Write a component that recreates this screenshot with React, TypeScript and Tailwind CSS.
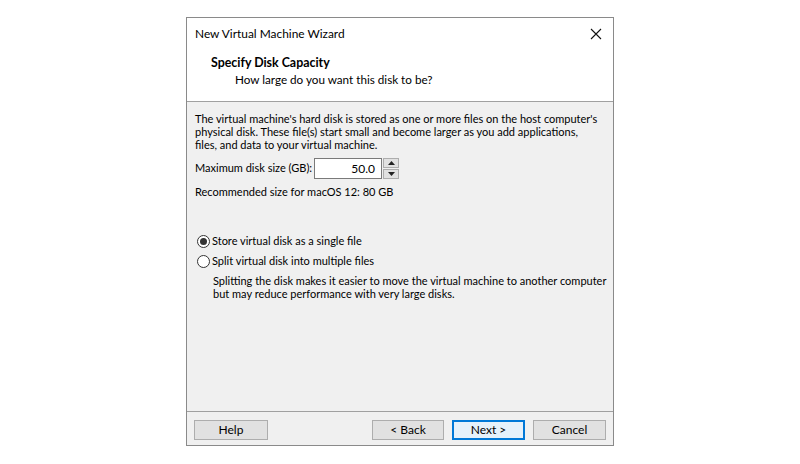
import React from "react";

const font = { fontFamily: 'Lato, "Noto Sans", "Open Sans", sans-serif' };

function Radio({ checked }: { checked: boolean }) {
  return (
    <span className="relative inline-flex w-[13px] h-[13px] rounded-full border border-[#333333] bg-white items-center justify-center shrink-0">
      {checked && <span className="w-[7px] h-[7px] rounded-full bg-[#333333]" />}
    </span>
  );
}

function Btn({ children, primary }: { children: React.ReactNode; primary?: boolean }) {
  return (
    <div
      className={
        "h-[20px] flex items-center justify-center bg-[#e1e1e1] text-[12px] text-black " +
        (primary ? "border-2 border-[#0078d7] bg-[#e5f1fb]" : "border border-[#adadad]")
      }
    >
      {children}
    </div>
  );
}

export default function App() {
  return (
    <div className="w-[800px] h-[464px] bg-white relative overflow-hidden" style={font}>
      <div className="absolute left-[186px] top-[17px] w-[428px] h-[429px] border border-[#8a8a8a] bg-[#f0f0f0] flex flex-col text-black">
        {/* title + header */}
        <div className="bg-white h-[83px] flex flex-col">
          <div className="h-[31px] flex items-center justify-between pl-[8px] pr-[10px]">
            <span className="text-[11.9px] leading-none">New Virtual Machine Wizard</span>
            <svg width="12" height="12" viewBox="0 0 12 12" className="mr-[1px]">
              <path d="M1 1 L11 11 M11 1 L1 11" stroke="#111" strokeWidth="1.1" />
            </svg>
          </div>
          <div className="pl-[24px] mt-[6px] text-[12.4px] leading-[16px] font-bold">Specify Disk Capacity</div>
          <div className="pl-[48px] text-[11.7px] leading-[16px]">How large do you want this disk to be?</div>
        </div>
        <div className="h-px bg-[#a0a0a0]" />
        {/* body */}
        <div className="flex-1 flex flex-col pl-[8px] pr-[8px] pt-[10px] text-[11px] whitespace-nowrap">
          <p className="leading-[13px]">
            The virtual machine's hard disk is stored as one or more files on the host computer's
            <br />
            physical disk. These file(s) start small and become larger as you add applications,
            <br />
            files, and data to your virtual machine.
          </p>
          <div className="mt-[7px] h-[21px] flex items-center">
            <span className="w-[119px]">Maximum disk size (GB):</span>
            <div className="h-[21px] w-[68px] border border-[#7a7a7a] bg-white flex items-center justify-end pr-[6px] text-[12px]">
              50.0
            </div>
            <div className="ml-[1px] h-[21px] w-[16px] flex flex-col gap-[1px]">
              <div className="flex-1 bg-[#e1e1e1] border border-[#adadad] flex items-center justify-center">
                <svg width="7" height="4" viewBox="0 0 7 4"><path d="M0 4 L3.5 0 L7 4 Z" fill="#222" /></svg>
              </div>
              <div className="flex-1 bg-[#e1e1e1] border border-[#adadad] flex items-center justify-center">
                <svg width="7" height="4" viewBox="0 0 7 4"><path d="M0 0 L3.5 4 L7 0 Z" fill="#222" /></svg>
              </div>
            </div>
          </div>
          <div className="mt-[6px] leading-[13px]">Recommended size for macOS 12: 80 GB</div>
          <div className="mt-[33px] h-[20px] flex items-center gap-[2px] pl-[2px]">
            <Radio checked />
            <span>Store virtual disk as a single file</span>
          </div>
          <div className="h-[20px] flex items-center gap-[2px] pl-[2px]">
            <Radio checked={false} />
            <span>Split virtual disk into multiple files</span>
          </div>
          <p className="mt-[3px] pl-[18px] leading-[13px]">
            Splitting the disk makes it easier to move the virtual machine to another computer
            <br />
            but may reduce performance with very large disks.
          </p>
        </div>
        <div className="h-px bg-[#a0a0a0]" />
        <div className="h-[33px] flex items-start pt-[8px] pl-[7px] pr-[7px]">
          <div className="w-[74px]"><Btn>Help</Btn></div>
          <div className="flex-1" />
          <div className="w-[72px]"><Btn>&lt; Back</Btn></div>
          <div className="w-[73px] ml-[8px]"><Btn primary>Next &gt;</Btn></div>
          <div className="w-[73px] ml-[8px]"><Btn>Cancel</Btn></div>
        </div>
      </div>
    </div>
  );
}
